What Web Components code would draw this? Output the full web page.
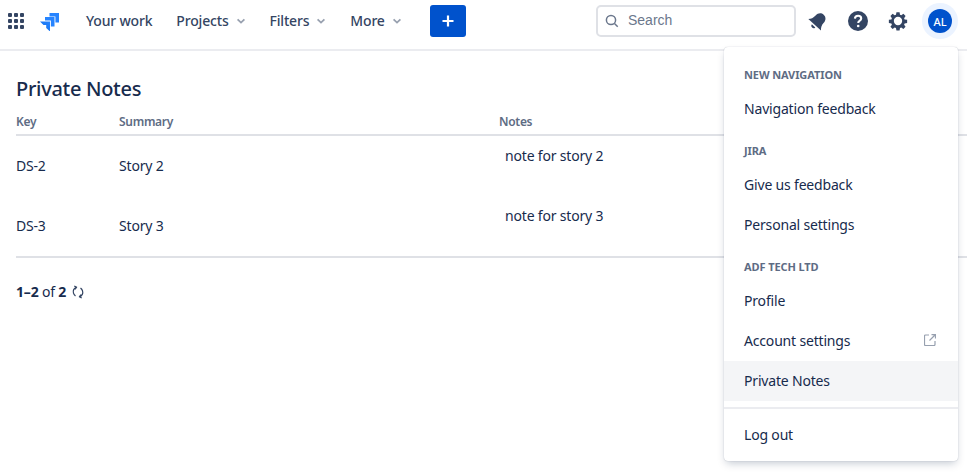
<!DOCTYPE html>
<html lang="en">
<head>
<meta charset="utf-8">
<title>Private Notes</title>
<style>
  html, body { margin: 0; height: 100%; overflow: hidden; background: #fff; }
  body { font-family: "Noto Sans", "Open Sans", sans-serif; font-size: 14px; letter-spacing: -0.18px; color: #172b4d; }
</style>
</head>
<body>
<jira-shell>
  <top-nav></top-nav>
  <notes-page></notes-page>
  <profile-menu></profile-menu>
</jira-shell>

<script>
/* Outer frame: nav on top, page below, the open menu floats over both. */
class JiraShell extends HTMLElement {
  constructor() {
    super();
    this.attachShadow({ mode: 'open' }).innerHTML = `
      <style>
        :host { display: block; position: relative; height: 472px; overflow: hidden; }
      </style>
      <slot></slot>`;
  }
}

class NavLink extends HTMLElement {
  constructor() {
    super();
    const caret = this.hasAttribute('caret');
    this.attachShadow({ mode: 'open' }).innerHTML = `
      <style>
        :host { display: flex; align-items: center; gap: 4px; color: #344563; font-weight: 500; white-space: nowrap; }
        span { padding-bottom: 2px; }
        svg { display: block; }
      </style>
      <span><slot></slot></span>
      ${caret ? `<svg width="16" height="16" viewBox="0 0 16 16"><path d="M4.6 6.4 8 9.6l3.4-3.2" fill="none" stroke="#97a0af" stroke-width="1.8"/></svg>` : ''}`;
  }
}

class TopNav extends HTMLElement {
  constructor() {
    super();
    this.attachShadow({ mode: 'open' }).innerHTML = `
      <style>
        :host {
          display: flex; align-items: center; box-sizing: border-box;
          height: 51px; padding: 0 9px 7px 8px;
          border-bottom: 2px solid #ebecf0;
          background: #fff;
        }
        svg { display: block; flex: none; }
        .links { display: flex; align-items: center; margin-left: 26px; gap: 21px; }
        .links nav-link:first-child { margin-right: 3px; }
        .create {
          width: 36px; height: 32px; margin-left: 25px; border-radius: 3px; background: #0052cc;
          display: flex; align-items: center; justify-content: center;
        }
        .search {
          box-sizing: border-box; width: 200px; height: 32px; margin-left: auto;
          border: 2px solid #dfe1e6; border-radius: 5px; padding: 0 6px 2px;
          display: flex; align-items: center; gap: 8px; letter-spacing: 0;
          font-family: "Liberation Sans", sans-serif; color: #6b778c;
        }
        .search svg { margin-top: 2px; }
        .icons { display: flex; align-items: center; gap: 16px; margin-left: 10px; }
        .avatar-wrap {
          width: 36px; height: 36px; border-radius: 50%; background: #ebf3ff;
          display: flex; align-items: center; justify-content: center; margin-left: -4px;
        }
        .avatar {
          width: 24px; height: 24px; border-radius: 50%; background: #0052cc; color: #fff; letter-spacing: 0;
          font-size: 11px; font-weight: 500; display: flex; align-items: center; justify-content: center;
        }
      </style>
      <svg width="16" height="16" viewBox="0 0 16 16" fill="#344563">
        <rect x="0" y="0" width="4" height="4" rx="1"/><rect x="6" y="0" width="4" height="4" rx="1"/><rect x="12" y="0" width="4" height="4" rx="1"/>
        <rect x="0" y="6" width="4" height="4" rx="1"/><rect x="6" y="6" width="4" height="4" rx="1"/><rect x="12" y="6" width="4" height="4" rx="1"/>
        <rect x="0" y="12" width="4" height="4" rx="1"/><rect x="6" y="12" width="4" height="4" rx="1"/><rect x="12" y="12" width="4" height="4" rx="1"/>
      </svg>
      <svg width="20" height="20" viewBox="0 0 20 20" style="margin-left:16px">
        <defs><linearGradient id="j" x1="1" y1="0" x2="0" y2="1"><stop offset="0" stop-color="#2684ff"/><stop offset="1" stop-color="#0f6ce8"/></linearGradient></defs>
        <path d="M9.500 2h9.500v9.500h-3.600V5.600H9.500z" fill="#2684ff"/>
        <path d="M5 6h9.500v9.500h-3.600V9.600H5z" fill="#2684ff"/>
        <path d="M0 10.500h10v10l-3.800-3.500v-3H3.500z" fill="url(#j)"/>
      </svg>
      <div class="links">
        <nav-link>Your work</nav-link>
        <nav-link caret>Projects</nav-link>
        <nav-link caret>Filters</nav-link>
        <nav-link caret>More</nav-link>
      </div>
      <div class="create">
        <svg width="16" height="16" viewBox="0 0 16 16"><path d="M8 2.500v11M2.500 8h11" stroke="#fff" stroke-width="2.200"/></svg>
      </div>
      <div class="search">
        <svg width="16" height="16" viewBox="0 0 16 16" fill="none" stroke="#6b778c" stroke-width="1.500"><circle cx="7" cy="7" r="4.600"/><path d="m10.500 10.500 3.200 3.200"/></svg>
        <span>Search</span>
      </div>
      <div class="icons">
        <svg width="24" height="24" viewBox="0 0 24 24" fill="#344563">
          <g transform="rotate(42 12 12)">
            <path d="M12 3.500c-3.300 0-5.500 2.600-5.500 6 0 3.500-1 5.400-3 7.500h17c-2-2.100-3-4-3-7.500 0-3.400-2.200-6-5.500-6z"/>
            <path d="M9.700 18.600h4.600a2.300 2.300 0 0 1-4.600 0z"/>
          </g>
        </svg>
        <svg width="24" height="24" viewBox="0 0 24 24"><circle cx="12" cy="12" r="10" fill="#344563"/><path d="M8.900 9.600c.1-1.800 1.400-2.800 3.200-2.800 1.800 0 3.100 1 3.100 2.600 0 1.300-.8 1.900-1.700 2.500-.8.500-1.200.9-1.200 1.800v.4" fill="none" stroke="#fff" stroke-width="2.100"/><circle cx="12.200" cy="17" r="1.300" fill="#fff"/></svg>
        <svg width="24" height="24" viewBox="0 0 24 24"><path transform="translate(12 12) scale(.87) translate(-12 -12)" fill="#344563" fill-rule="evenodd" d="M10.200 2h3.600l.5 2.900 1.500.6 2.400-1.700 2.500 2.500-1.700 2.400.6 1.500 2.900.5v3.600l-2.900.5-.6 1.500 1.700 2.400-2.500 2.500-2.400-1.700-1.500.6-.5 2.900h-3.600l-.5-2.900-1.500-.6-2.400 1.700-2.500-2.500 1.700-2.400-.6-1.500-2.900-.5v-3.600l2.900-.5.6-1.500-1.700-2.400 2.500-2.500 2.400 1.700 1.500-.6zM12 7.200a4.800 4.800 0 1 0 0 9.600 4.800 4.800 0 0 0 0-9.600z"/></svg>
        <div class="avatar-wrap"><div class="avatar">AL</div></div>
      </div>`;
  }
}

class NotesPage extends HTMLElement {
  constructor() {
    super();
    const rows = [
      ['DS-2', 'Story 2', 'note for story 2'],
      ['DS-3', 'Story 3', 'note for story 3'],
    ];
    this.attachShadow({ mode: 'open' }).innerHTML = `
      <style>
        :host { display: block; padding: 26px 0 0 16px; color: #172b4d; }
        h1 { margin: 0; font-size: 20px; line-height: 24px; font-weight: 500; letter-spacing: -0.3px; color: #172b4d; }
        .grid { display: grid; grid-template-columns: 103px 380px 1fr; margin-top: 12px; }
        .th {
          box-sizing: border-box; padding-top: 1px; letter-spacing: -0.3px;
          font-size: 12px; font-weight: 600; line-height: 16px; color: #5e6c84;
          height: 23px; border-bottom: 2px solid #dfe1e6;
        }
        .td { box-sizing: border-box; height: 60px; padding-bottom: 2px; display: flex; align-items: center; }
        .note { align-items: flex-start; padding: 10px 0 0 6px; }
        .end { grid-column: 1 / -1; height: 2px; background: #dfe1e6; }
        .foot { margin-top: 24px; display: flex; align-items: center; gap: 5px; line-height: 20px; color: #172b4d; }
        b { font-weight: 700; }
        svg { display: block; }
      </style>
      <h1>Private Notes</h1>
      <div class="grid">
        <div class="th">Key</div><div class="th">Summary</div><div class="th">Notes</div>
        ${rows.map(([k, s, n]) => `
          <div class="td">${k}</div><div class="td">${s}</div><div class="td note">${n}</div>`).join('')}
        <div class="end"></div>
      </div>
      <div class="foot">
        <span><b>1–2</b> of <b>2</b></span>
        <svg width="14" height="14" viewBox="0 0 14 14" fill="none" stroke="#344563" stroke-width="1.200">
          <path d="M5.500 2.300C2.800 3 1.700 5.800 2.500 8.300c.4 1.100 1 1.900 2 2.700"/><path d="M3.300 1 5.500 2.300 4 4.300"/>
          <path d="M8.500 11.700c2.700-.7 3.800-3.500 3-6-.4-1.100-1-1.900-2-2.700"/><path d="M10.700 13 8.500 11.700l1.500-2"/>
        </svg>
      </div>`;
  }
}

class MenuItem extends HTMLElement {
  constructor() {
    super();
    this.attachShadow({ mode: 'open' }).innerHTML = `
      <style>
        :host {
          display: flex; align-items: center; justify-content: space-between; box-sizing: border-box;
          height: 40px; padding: 0 22px 2px 20px; color: #172b4d;
        }
        :host([active]) { background: #f4f5f7; }
        svg { display: block; }
      </style>
      <slot></slot>
      ${this.hasAttribute('external') ? `<svg width="12" height="12" viewBox="0 0 12 12" fill="none" stroke="#97a0af" stroke-width="1.200"><path d="M5 1H1.500a1 1 0 0 0-1 1v8.500a1 1 0 0 0 1 1H10a1 1 0 0 0 1-1V7"/><path d="M5.500 6.500 11 1M7.500.6h4v4"/></svg>` : ''}`;
  }
}

class MenuHeading extends HTMLElement {
  constructor() {
    super();
    this.attachShadow({ mode: 'open' }).innerHTML = `
      <style>
        :host {
          display: block; padding: 14px 20px 6px; font-size: 11px; line-height: 16px; letter-spacing: -0.1px;
          font-weight: 700; text-transform: uppercase; color: #5e6c84;
        }
      </style>
      <slot></slot>`;
  }
}

class ProfileMenu extends HTMLElement {
  constructor() {
    super();
    this.attachShadow({ mode: 'open' }).innerHTML = `
      <style>
        :host {
          position: absolute; top: 47px; right: 9px; width: 234px; box-sizing: border-box;
          padding: 6px 0; background: #fff; border-radius: 4px;
          box-shadow: 0 4px 8px -2px rgba(9,30,66,.25), 0 0 1px rgba(9,30,66,.31);
        }
        hr { border: 0; height: 2px; margin: 6px 0; background: #ebecf0; }
      </style>
      <menu-heading>New navigation</menu-heading>
      <menu-item>Navigation feedback</menu-item>
      <menu-heading>Jira</menu-heading>
      <menu-item>Give us feedback</menu-item>
      <menu-item>Personal settings</menu-item>
      <menu-heading>ADF Tech Ltd</menu-heading>
      <menu-item>Profile</menu-item>
      <menu-item external>Account settings</menu-item>
      <menu-item active>Private Notes</menu-item>
      <hr>
      <menu-item>Log out</menu-item>`;
  }
}

customElements.define('jira-shell', JiraShell);
customElements.define('nav-link', NavLink);
customElements.define('top-nav', TopNav);
customElements.define('notes-page', NotesPage);
customElements.define('menu-item', MenuItem);
customElements.define('menu-heading', MenuHeading);
customElements.define('profile-menu', ProfileMenu);
</script>
</body>
</html>
